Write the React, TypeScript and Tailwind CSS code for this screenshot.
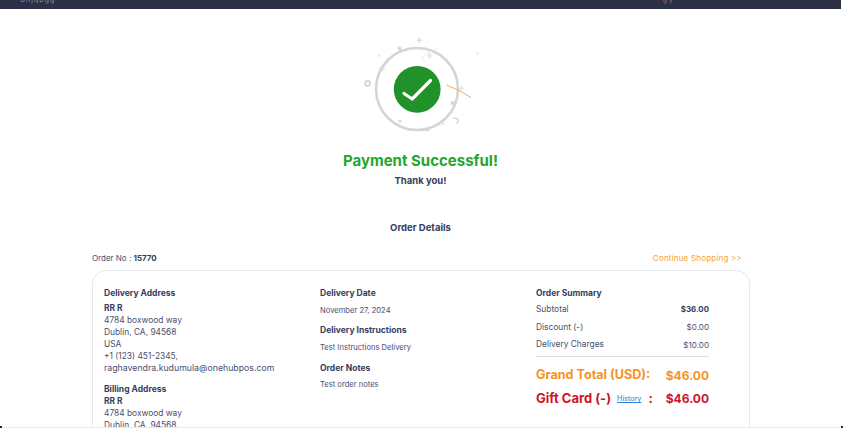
import React from "react";

function Art() {
  return (
    <svg width="120" height="100" viewBox="360.5 35 120 100" fill="none" className="block">
      <circle cx="416.5" cy="89" r="41" stroke="#d3d5da" strokeWidth="2.6" />
      <circle cx="416.7" cy="89.3" r="23.4" fill="#219229" />
      <path d="M403.5 93.5 L411.7 99 L430 80.5" stroke="#fff" strokeWidth="3.2" strokeLinecap="round" strokeLinejoin="round" />
      <path d="M446 85 C450 87 453 88 456 89.5 C460 91 463 93 470.5 97.5" stroke="#f7a94a" strokeWidth="1" />
      <path d="M425 63 C422 61 421 58 423 56 C425 54 427 52 431 50" stroke="#dfe1e5" strokeWidth="0.7" />
      <path d="M429 52 l3 3.5 l-3 3.5 l-3 -3.5 z" fill="#e9eaee" />
      <path d="M419 37 l1 2.3 l2.3 1 l-2.3 1 l-1 2.3 l-1 -2.3 l-2.3 -1 l2.3 -1 z" fill="#d8dbe1" />
      <path d="M381.5 65 l1.2 2.3 l2.3 1.2 l-2.3 1.2 l-1.2 2.3 l-1.2 -2.3 l-2.3 -1.2 l2.3 -1.2 z" fill="#d8dbe1" />
      <path d="M461 85 l1 2.3 l2.3 1 l-2.3 1 l-1 2.3 l-1 -2.3 l-2.3 -1 l2.3 -1 z" fill="#e4e6ea" />
      <circle cx="399" cy="48.5" r="2" fill="#d3d6dc" />
      <circle cx="378.8" cy="55.5" r="1.1" fill="#d8dbe1" />
      <circle cx="436" cy="48.8" r="0.9" fill="#e6e8ec" />
      <circle cx="477" cy="53.5" r="1.3" fill="#e6e8ec" />
      <circle cx="367" cy="83.5" r="2.5" stroke="#d3d6dc" strokeWidth="1.8" />
      <circle cx="373.5" cy="100.5" r="0.6" fill="#e6e8ec" />
      <circle cx="452" cy="103" r="1.9" fill="#d3d6dc" />
      <circle cx="399.5" cy="121" r="1.5" fill="#d3d6dc" />
      <circle cx="427" cy="129.5" r="2" fill="#d3d6dc" />
      <circle cx="443" cy="124" r="1.4" fill="#e6e8ec" />
      <path d="M453 118.5 A2.6 2.6 0 1 1 456 123.5" stroke="#d3d6dc" strokeWidth="1.5" />
    </svg>
  );
}

function Row({ label, value, strong }: { label: string; value: string; strong?: boolean }) {
  return (
    <div className="flex h-[17.5px] items-center justify-between text-[8.4px] text-[#48506f]">
      <span>{label}</span>
      <span className={strong ? "text-[7.9px] font-bold text-[#343c60]" : "text-[8.1px]"}>{value}</span>
    </div>
  );
}

function Heading({ children, className = "" }: { children: React.ReactNode; className?: string }) {
  return <div className={`h-3 text-[8.5px] font-bold leading-3 text-[#343c60] ${className}`}>{children}</div>;
}

export default function App() {
  return (
    <div className="relative h-[428px] w-[843px] overflow-hidden bg-white font-['Inter','Liberation_Sans',sans-serif]">
      <div className="flex h-[9px] w-[841px] items-start justify-between bg-[#2b3046] pl-[20px] pr-[168px]">
        <span className="mt-[-4px] text-[7px] leading-[7px] tracking-[1px] text-[#8b8f9f]">Ghjqpgg</span>
        <span className="mt-[-4px] text-[7px] leading-[7px] text-[#8b6f78]">g y</span>
      </div>
      <div className="w-[841px]">
        <div className="mt-[26px] flex justify-center">
          <Art />
        </div>
        <h1 className="mt-[16px] text-center text-[15px] font-bold leading-[20px] text-[#1fa72b]">Payment Successful!</h1>
        <p className="mt-[1px] text-center text-[9.5px] font-bold leading-[18px] text-[#343c60]">Thank you!</p>
        <h2 className="mt-[29px] text-center text-[9.5px] font-bold leading-[18px] text-[#343c60]">Order Details</h2>
        <div className="mx-[92px] mt-[12px] flex h-[18px] items-center justify-between pr-[7px] text-[8px]">
          <span className="text-[#48506f]">
            Order No : <b className="text-[#343c60]">15770</b>
          </span>
          <span className="tracking-[0.2px] text-[#f7a22f]">Continue Shopping &gt;&gt;</span>
        </div>
        <div className="ml-[92px] mt-[3px] grid h-[300px] w-[658px] grid-cols-[216px_216px_173px] rounded-[14px] border border-[#e6e7ea] px-[11px] pt-[16px]">
          <div className="text-[8.4px] leading-3 text-[#48506f]">
            <Heading>Delivery Address</Heading>
            <div className="mt-[3px] font-bold text-[#343c60]">RR R</div>
            <div>4784 boxwood way</div>
            <div>Dublin, CA, 94568</div>
            <div>USA</div>
            <div>+1 (123) 451-2345,</div>
            <div className="text-[8.75px]">raghavendra.kudumula@onehubpos.com</div>
            <Heading className="mt-[9px]">Billing Address</Heading>
            <div className="font-bold text-[#343c60]">RR R</div>
            <div>4784 boxwood way</div>
            <div>Dublin, CA, 94568</div>
          </div>
          <div className="text-[7.6px] leading-3 text-[#48506f]">
            <Heading>Delivery Date</Heading>
            <div className="mt-[6px]">November 27, 2024</div>
            <Heading className="mt-[7px]">Delivery Instructions</Heading>
            <div className="mt-[6px]">Test Instructions Delivery</div>
            <Heading className="mt-[8px]">Order Notes</Heading>
            <div className="mt-[5px]">Test order notes</div>
          </div>
          <div>
            <Heading>Order Summary</Heading>
            <div className="mt-[2px]">
              <Row label="Subtotal" value="$36.00" strong />
              <Row label="Discount (-)" value="$0.00" />
              <Row label="Delivery Charges" value="$10.00" />
            </div>
            <div className="mt-[2px] border-t border-[#dcdde1]" />
            <div className="mt-[10px] flex h-[18px] items-center justify-between text-[12.6px] font-bold text-[#f7931e]">
              <span>Grand Total (USD):</span>
              <span className="text-[12px]">$46.00</span>
            </div>
            <div className="mt-[5px] flex h-[18px] items-center text-[13px] font-bold text-[#cf1328]">
              <span>Gift Card (-)</span>
              <a className="ml-[6px] mt-[2px] text-[7.2px] font-normal text-[#2f7be0] underline">History</a>
              <span className="ml-[7px]">:</span>
              <span className="ml-auto text-[12px]">$46.00</span>
            </div>
          </div>
        </div>
      </div>
      <div className="absolute inset-x-0 bottom-0 h-px bg-[#e8e9eb]" />
      <div className="absolute bottom-0 left-0 h-[2px] w-[2px] bg-[#23283a]" />
      <div className="absolute bottom-0 right-0 h-[2px] w-[2px] bg-[#23283a]" />
    </div>
  );
}
